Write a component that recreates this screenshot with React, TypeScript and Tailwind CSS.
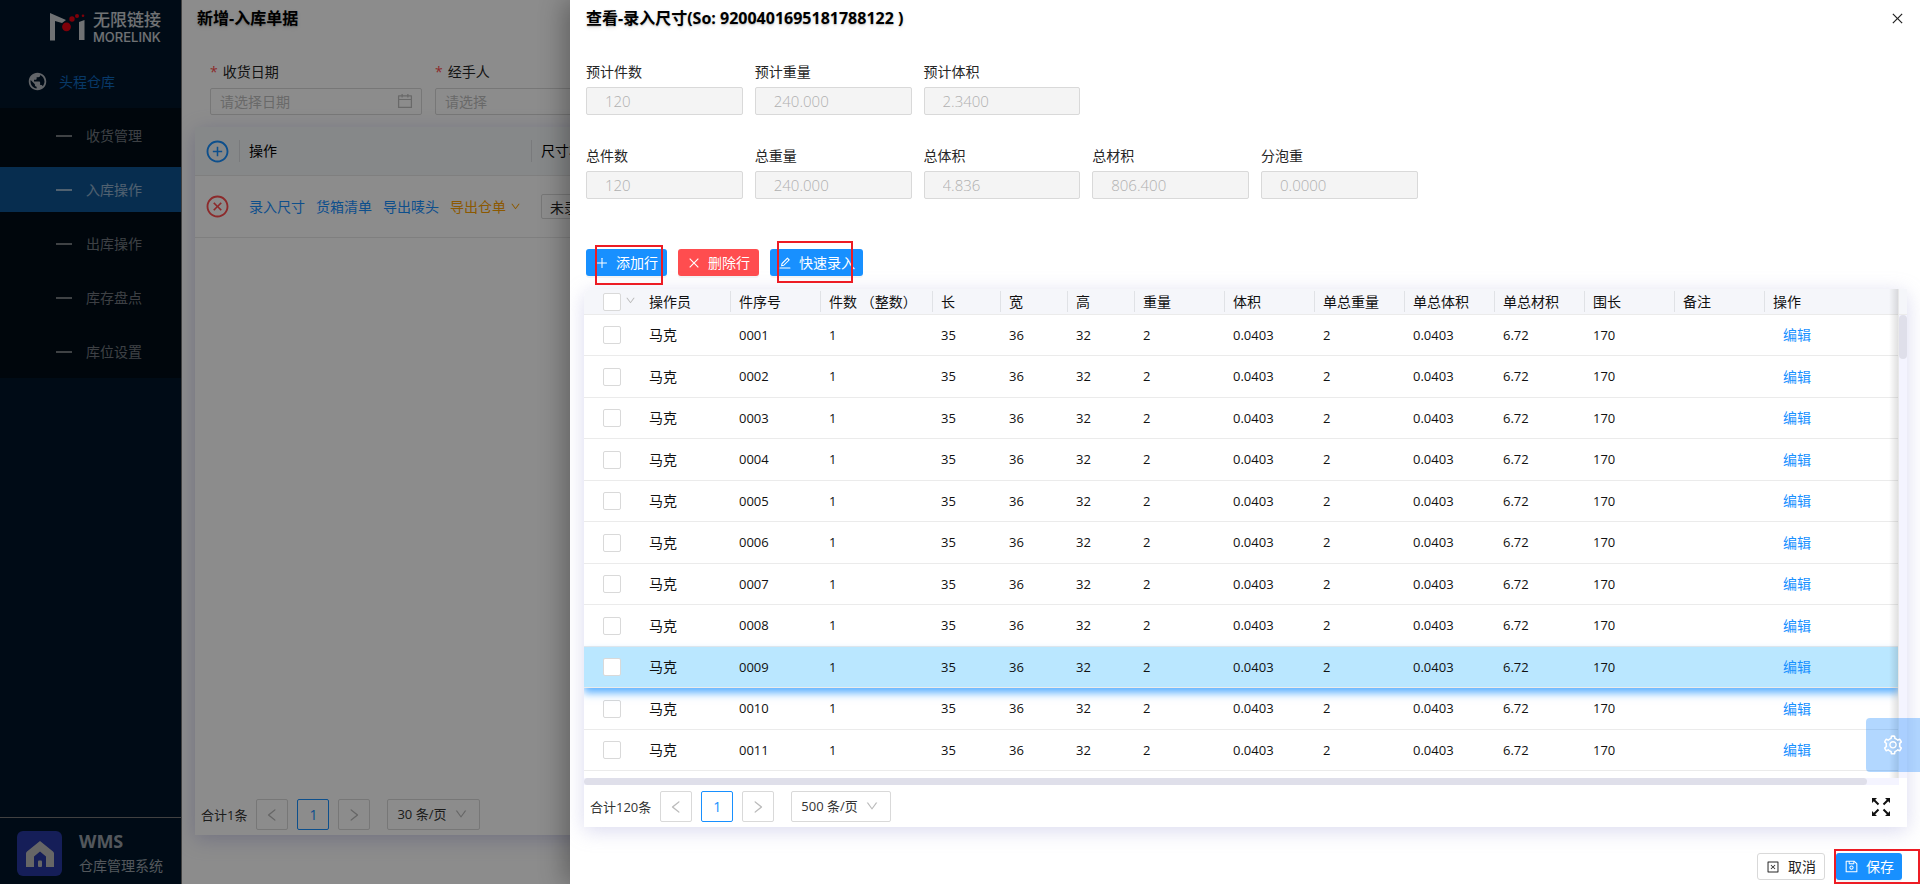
import React from "react";
import clsx from "clsx";
import {
  AiOutlineCalendar,
  AiOutlineClose,
  AiOutlineCloseCircle,
  AiOutlineCloseSquare,
  AiOutlineDown,
  AiOutlineEdit,
  AiOutlineLeft,
  AiOutlinePlus,
  AiOutlinePlusCircle,
  AiOutlineRight,
  AiOutlineSave,
  AiOutlineSetting,
} from "react-icons/ai";
import { MdPublic } from "react-icons/md";

const menuItems = ["收货管理", "入库操作", "出库操作", "库存盘点", "库位设置"];

const columns = [
  { title: "操作员", width: "w-[90px]" },
  { title: "件序号", width: "w-[90px]" },
  { title: "件数 （整数）", width: "w-[112px]" },
  { title: "长", width: "w-[68px]" },
  { title: "宽", width: "w-[67px]" },
  { title: "高", width: "w-[67px]" },
  { title: "重量", width: "w-[90px]" },
  { title: "体积", width: "w-[90px]" },
  { title: "单总重量", width: "w-[90px]" },
  { title: "单总体积", width: "w-[90px]" },
  { title: "单总材积", width: "w-[90px]" },
  { title: "围长", width: "w-[90px]" },
  { title: "备注", width: "w-[90px]" },
  { title: "操作", width: "" },
];

const rows = Array.from({ length: 11 }, (_, i) => ({
  operator: "马克",
  no: String(i + 1).padStart(4, "0"),
  values: ["1", "35", "36", "32", "2", "0.0403", "2", "0.0403", "6.72", "170", ""],
}));

const expected = [
  { id: "expected-count", label: "预计件数", value: "120" },
  { id: "expected-weight", label: "预计重量", value: "240.000" },
  { id: "expected-volume", label: "预计体积", value: "2.3400" },
];

const totals = [
  { id: "total-count", label: "总件数", value: "120" },
  { id: "total-weight", label: "总重量", value: "240.000" },
  { id: "total-volume", label: "总体积", value: "4.836" },
  { id: "total-material", label: "总材积", value: "806.400" },
  { id: "bubble-weight", label: "分泡重", value: "0.0000" },
];

const Logo = () => (
  <div className="flex items-center gap-2 pl-[50px] pt-[10px] text-white/80">
    <svg width="35" height="28" viewBox="0 0 35 28">
      <path d="M0 0 L16 7 L12 10 L5 8 V27.500 H0 Z" fill="currentColor" />
      <path d="M29 9 L34.500 7 V27 H29 Z" fill="currentColor" />
      <circle cx="16.500" cy="13.800" r="4.400" fill="#e60012" />
      <circle cx="22" cy="6" r="2.700" fill="#e60012" />
      <circle cx="27" cy="3" r="2" fill="#e60012" />
      <circle cx="33" cy="2.800" r="1.300" fill="#e60012" />
    </svg>
    <div>
      <div className="text-[17px] font-medium leading-5">无限链接</div>
      <div className="font-['Inter',sans-serif] text-[13px] font-medium leading-[14px]">
        MORELINK
      </div>
    </div>
  </div>
);

const HomeIcon = () => (
  <svg width="28" height="26" viewBox="0 0 28 26" fill="#bbb">
    <path
      fillRule="evenodd"
      d="M14 0 L27 10.500 Q28 11.400 28 12.500 V26 H20 V15.500 L14 10.500 L8 15.500 V26 H0 V12.500 Q0 11.400 1 10.500 Z"
    />
    <rect x="12" y="19.500" width="4" height="6.500" rx="1" />
  </svg>
);

const ExpandIcon = () => (
  <svg width="18" height="18" viewBox="0 0 18 18" stroke="#111" fill="#111">
    <path
      d="M2 2 L6.500 6.500 M16 2 L11.500 6.500 M2 16 L6.500 11.500 M16 16 L11.500 11.500"
      strokeWidth="2"
    />
    <path
      d="M0 0 H5 L0 5 Z M18 0 H13 L18 5 Z M0 18 H5 L0 13 Z M18 18 H13 L18 13 Z"
      stroke="none"
    />
  </svg>
);

const Sidebar = () => (
  <aside className="flex w-[182px] shrink-0 flex-col border-r border-[#777] bg-[#001529]">
    <div className="h-[55px]">
      <Logo />
    </div>
    <a href="#warehouse" className="flex h-[53px] items-center pl-[27px] text-[#1890ff]/70">
      <MdPublic className="size-[21px] text-white/70" />
      <span className="pl-[11px]">头程仓库</span>
    </a>
    <nav className="flex flex-col gap-[9px] bg-[#000c17] pb-1 pt-[5px]">
      {menuItems.map((item) => (
        <a
          key={item}
          href={`#${item}`}
          className={clsx(
            "flex h-[45px] items-center gap-[14px] pl-14",
            item === "入库操作" ? "bg-[#0e5290] text-white/55" : "text-white/45"
          )}
        >
          <span className="h-[2px] w-4 bg-current" />
          {item}
        </a>
      ))}
    </nav>
    <div className="mt-auto flex h-[67px] items-center gap-[17px] border-t border-[#777] pl-[17px] pt-[9px]">
      <span className="-mt-1 flex size-[45px] items-center justify-center rounded-md bg-[#2737a0]">
        <HomeIcon />
      </span>
      <div className="-mt-1 text-white/60">
        <div className="text-lg font-bold leading-6">WMS</div>
        <div className="leading-[26px]">仓库管理系统</div>
      </div>
    </div>
  </aside>
);

interface PaginationProps {
  total: string;
  size: string;
  name: string;
}

const Pagination = ({ total, size, name }: PaginationProps) => (
  <div className="flex h-[31px] items-center gap-[9px] text-[#333]">
    <span className="pt-[2px] text-[13px]">{total}</span>
    <button aria-label="上一页" className="flex h-[31px] w-8 items-center justify-center rounded-xs border border-[#d9d9d9] text-[#bbb]">
      <AiOutlineLeft className="size-4" />
    </button>
    <button className="h-[31px] w-8 rounded-xs border border-[#1890ff] text-[#1890ff]">1</button>
    <button aria-label="下一页" className="flex h-[31px] w-8 items-center justify-center rounded-xs border border-[#d9d9d9] text-[#bbb]">
      <AiOutlineRight className="size-4" />
    </button>
    <div className="relative ml-2">
      <select
        aria-label={name}
        className="h-[31px] appearance-none rounded-xs border border-[#d9d9d9] bg-transparent pl-[9px] pr-8 text-[13px]"
      >
        <option>{size}</option>
      </select>
      <AiOutlineDown className="pointer-events-none absolute right-3 top-2 size-[14px] text-[#bbb]" />
    </div>
  </div>
);

const RequiredLabel = ({ id, children }: { id: string; children: React.ReactNode }) => (
  <label htmlFor={id} className="mb-[5px] block leading-[22px] text-[#262626]">
    <span className="mr-[5px] text-[#ff4d4f]">*</span>
    {children}
  </label>
);

const ReceiptPage = () => (
  <main className="flex min-w-0 flex-1 flex-col overflow-hidden bg-white pb-[49px] pl-[13px]">
    <h1 className="h-9 pl-[2px] text-base font-bold leading-9 text-black text-shadow-md">
      新增-入库单据
    </h1>
    <div className="flex gap-[13px] pl-[15px] pt-[25px]">
      <div className="w-[212px]">
        <RequiredLabel id="receive-date">收货日期</RequiredLabel>
        <div className="relative">
          <input
            id="receive-date"
            placeholder="请选择日期"
            className="h-[27px] w-full rounded-xs border border-[#d9d9d9] px-[9px] placeholder:text-[#bfbfbf]"
          />
          <AiOutlineCalendar className="absolute right-2 top-1 size-[18px] text-[#bfbfbf]" />
        </div>
      </div>
      <div className="w-[212px]">
        <RequiredLabel id="handler">经手人</RequiredLabel>
        <input
          id="handler"
          placeholder="请选择"
          className="h-[27px] w-full rounded-xs border border-[#d9d9d9] px-[9px] placeholder:text-[#bfbfbf]"
        />
      </div>
    </div>
    <section className="mt-3 flex flex-1 flex-col rounded-t-lg pb-[5px] shadow-[0_4px_20px_rgba(150,150,210,0.45)]">
      <table className="w-full table-fixed border-separate border-spacing-0 text-left">
        <thead>
          <tr className="h-[49px] bg-[#f5f7fa] text-black">
            <th className="w-11 border-b border-[#e8e8e8] pl-[10px]">
              <button aria-label="新增" className="flex text-[#1890ff]">
                <AiOutlinePlusCircle className="size-[25px]" />
              </button>
            </th>
            <th className="w-[292px] border-b border-[#e8e8e8] font-normal">
              <div className="border-l border-[#dcdee2] pl-[9px] leading-[22px]">操作</div>
            </th>
            <th className="border-b border-[#e8e8e8] font-normal">
              <div className="border-l border-[#dcdee2] pl-[9px] leading-[22px]">尺寸状态</div>
            </th>
          </tr>
        </thead>
        <tbody>
          <tr className="h-[62px]">
            <td className="border-b border-[#e8e8e8] pl-[10px]">
              <button aria-label="移除" className="flex text-[#ff4d4f]">
                <AiOutlineCloseCircle className="size-[25px]" />
              </button>
            </td>
            <td className="border-b border-[#e8e8e8] pl-[10px]">
              <div className="flex items-center gap-[11px] text-[#1890ff]">
                <a href="#size">录入尺寸</a>
                <a href="#boxes">货箱清单</a>
                <a href="#marks">导出唛头</a>
                <a href="#receipt" className="flex items-center gap-1 text-[#ffa200]">
                  导出仓单
                  <AiOutlineDown className="size-[11px]" />
                </a>
              </div>
            </td>
            <td className="border-b border-[#e8e8e8] pl-[10px]">
              <input
                aria-label="尺寸状态"
                defaultValue="未录入"
                className="h-[25px] w-20 rounded-xs border border-[#d9d9d9] px-2 text-[#262626]"
              />
            </td>
          </tr>
        </tbody>
      </table>
      <div className="mt-auto pl-[6px]">
        <Pagination total="合计1条" size="30 条/页" name="每页条数" />
      </div>
    </section>
  </main>
);

const ReadonlyFields = ({ fields }: { fields: typeof totals }) => (
  <div className="-mr-1 grid grid-cols-8 gap-x-3">
    {fields.map((field) => (
      <div key={field.id}>
        <label htmlFor={field.id} className="mb-1 block leading-[22px] text-[#262626]">
          {field.label}
        </label>
        <input
          id={field.id}
          disabled
          value={field.value}
          className="block h-7 w-full rounded-xs border border-[#d9d9d9] bg-[#f4f4f4] px-[18px] text-[15px] font-light text-[#b0b0b0]"
        />
      </div>
    ))}
  </div>
);

const buttonStyles =
  "flex h-[27px] items-center gap-[7px] rounded-[3px] text-white shadow-[0_2px_0_rgba(0,0,0,0.04)]";

const SizeTable = () => (
  <div className="flex flex-1">
    <div className="relative flex flex-1 flex-col overflow-hidden">
      <table className="w-full table-fixed border-separate border-spacing-0 text-left text-[#111]">
        <thead>
          <tr className="h-[26px] bg-[#f5f6fa]">
            <th className="w-14 rounded-tl-lg border-b border-[#ebebeb] pl-[19px]">
              <div className="flex gap-1">
                <input
                  type="checkbox"
                  aria-label="全选"
                  className="size-[18px] shrink-0 appearance-none rounded-xs border border-[#d9d9d9] bg-white"
                />
                <AiOutlineDown className="mt-[2px] size-[11px] shrink-0 text-[#bbb]" />
              </div>
            </th>
            {columns.map((column, i) => (
              <th key={column.title + i} className={clsx("border-b border-[#ebebeb] font-normal", column.width)}>
                <div
                  className={clsx(
                    "whitespace-nowrap border-l pl-2 leading-[21px]",
                    i === 0 ? "border-transparent" : "border-[#e0e2e6]"
                  )}
                >
                  {column.title}
                </div>
              </th>
            ))}
          </tr>
        </thead>
        <tbody>
          {rows.map((row) => (
            <tr
              key={row.no}
              className={clsx(
                "odd:h-[41px] even:h-[42px] [&>td]:border-b [&>td]:border-[#ebebeb]",
                row.no === "0009" &&
                  "relative bg-[#bae7ff] shadow-[0_5px_8px_rgba(24,144,255,0.7)]"
              )}
            >
              <td className="pl-[19px]">
                <input
                  type="checkbox"
                  aria-label={row.no}
                  className="block size-[18px] appearance-none rounded-xs border border-[#d9d9d9] bg-white"
                />
              </td>
              <td className="pl-[9px]">{row.operator}</td>
              <td className="pl-[9px] text-[13px]">{row.no}</td>
              {row.values.map((value, i) => (
                <td key={i} className="pl-[9px] text-[13px]">
                  {value}
                </td>
              ))}
              <td className="pl-[19px]">
                <a href={`#edit-${row.no}`} className="text-[#1890ff]">
                  编辑
                </a>
              </td>
            </tr>
          ))}
        </tbody>
      </table>
      {/* shade of the fixed column */}
      <div className="pointer-events-none absolute inset-y-0 right-0 w-[10px] border-r border-[#e8e8e8] bg-linear-to-r from-transparent to-black/12" />
    </div>
    <div className="flex w-2 flex-col">
      <div className="h-[26px] border-b border-[#ebebeb] bg-[#f5f6fa]" />
      <div className="flex-1 bg-[#f4f4ff]">
        <div className="h-11 rounded-full bg-[#dfdfea]" />
      </div>
    </div>
  </div>
);

const SizeDrawer = () => (
  <section className="absolute inset-y-0 left-[570px] right-0 flex flex-col overflow-hidden bg-white pb-1 shadow-[-6px_0_24px_rgba(0,0,0,0.3)]">
    <header className="flex h-9 items-center justify-between pl-4 pr-[15px]">
      <h2 className="text-base font-bold text-black text-shadow-md">
        查看-录入尺寸(So: 9200401695181788122 )
      </h2>
      <button aria-label="关闭" className="text-[#222]">
        <AiOutlineClose className="size-[15px]" />
      </button>
    </header>

    <form className="flex flex-col gap-[30px] pl-4 pt-[25px]">
      <ReadonlyFields fields={expected} />
      <ReadonlyFields fields={totals} />
    </form>

    <div className="mt-[50px] flex gap-[11px] pl-4">
      <div className="relative">
        <button className={clsx(buttonStyles, "bg-[#1890ff] px-[9px]")}>
          <AiOutlinePlus className="size-[14px]" />
          添加行
        </button>
        <div className="pointer-events-none absolute -top-1 left-[9px] h-10 w-[68px] border-2 border-[#ed1c24]" />
      </div>
      <button className={clsx(buttonStyles, "bg-[#ff4d4f] px-[9px]")}>
        <AiOutlineClose className="size-[14px]" />
        删除行
      </button>
      <div className="relative">
        <button className={clsx(buttonStyles, "bg-[#1890ff] px-2")}>
          <AiOutlineEdit className="size-[14px]" />
          快速录入
        </button>
        <div className="pointer-events-none absolute -top-2 left-[7px] h-[42px] w-[76px] border-2 border-[#ed1c24]" />
      </div>
    </div>

    <div className="ml-[14px] mr-[13px] mt-[13px] flex flex-1 flex-col rounded-t-lg bg-white pb-[5px] shadow-[0_4px_20px_rgba(150,150,210,0.35)]">
      <SizeTable />
      <div className="mr-2 bg-[#f4f4ff]">
        <div className="mr-8 h-[7px] rounded-full bg-[#dfdfea]" />
      </div>
      <div className="mt-[6px] flex items-center justify-between pl-[6px] pr-[17px]">
        <Pagination total="合计120条" size="500 条/页" name="每页件数" />
        <button aria-label="全屏">
          <ExpandIcon />
        </button>
      </div>
    </div>

    <footer className="mt-[26px] flex justify-end gap-[11px] pr-[18px]">
      <button className="flex h-[27px] items-center gap-2 rounded-[3px] border border-[#d9d9d9] px-2 text-[#262626]">
        <AiOutlineCloseSquare className="size-[14px]" />
        取消
      </button>
      <div className="relative">
        <button className={clsx(buttonStyles, "bg-[#1890ff] px-2")}>
          <AiOutlineSave className="size-[15px]" />
          保存
        </button>
        <div className="pointer-events-none absolute -left-[2px] -top-1 h-[35px] w-[86px] border-2 border-[#ed1c24]" />
      </div>
    </footer>

    <button
      aria-label="设置"
      className="absolute bottom-28 right-0 flex h-[54px] w-[54px] items-center justify-center rounded-l-[4px] bg-[#007bff]/30 text-white"
    >
      <AiOutlineSetting className="size-[22px]" />
    </button>
  </section>
);

export default function App() {
  return (
    <div className="relative flex min-h-screen overflow-hidden font-['Open_Sans','Noto_Sans_CJK_SC',sans-serif] text-sm">
      <Sidebar />
      <ReceiptPage />
      <div className="absolute inset-0 bg-black/45" />
      <SizeDrawer />
    </div>
  );
}
